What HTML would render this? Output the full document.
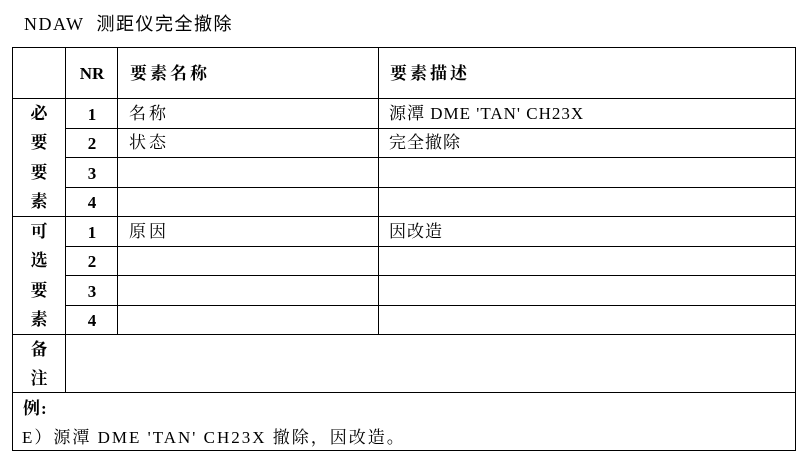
<!DOCTYPE html>
<html><head><meta charset="utf-8"><style>
body{margin:0;width:809px;height:473px;background:#fff;position:relative;overflow:hidden;font-family:"Liberation Serif","Noto Serif CJK SC",serif;color:#000}
.h{position:absolute;height:1.3px;background:#000}
.v{position:absolute;width:1.3px;background:#000}
.t{position:absolute;font-size:17px;line-height:20px;white-space:nowrap;letter-spacing:1px}
.b{font-weight:bold}
.c{width:26px;text-align:center;letter-spacing:0}
.n{width:52px;text-align:center;font-weight:bold;letter-spacing:0}
</style></head><body>
<div class="t" style="left:24px;top:14px;font-size:18px;letter-spacing:1.5px;font-family:'Liberation Serif','Noto Sans CJK SC',serif">NDAW&nbsp; 测距仪完全撤除</div>

<div class="h" style="left:12px;width:784px;top:47px"></div>
<div class="h" style="left:12px;width:784px;top:98px"></div>
<div class="h" style="left:65px;width:731px;top:128px"></div>
<div class="h" style="left:65px;width:731px;top:157px"></div>
<div class="h" style="left:65px;width:731px;top:187px"></div>
<div class="h" style="left:12px;width:784px;top:216px"></div>
<div class="h" style="left:65px;width:731px;top:246px"></div>
<div class="h" style="left:65px;width:731px;top:275px"></div>
<div class="h" style="left:65px;width:731px;top:305px"></div>
<div class="h" style="left:12px;width:784px;top:334px"></div>
<div class="h" style="left:12px;width:784px;top:392px"></div>
<div class="h" style="left:12px;width:784px;top:450px"></div>
<div class="v" style="left:12px;top:47px;height:404px"></div>
<div class="v" style="left:65px;top:47px;height:346px"></div>
<div class="v" style="left:117px;top:47px;height:288px"></div>
<div class="v" style="left:378px;top:47px;height:288px"></div>
<div class="v" style="left:795px;top:47px;height:404px"></div>

<div class="t n" style="left:66px;top:64px">NR</div>
<div class="t b" style="left:130px;top:64px;letter-spacing:3px">要素名称</div>
<div class="t b" style="left:390px;top:64px;letter-spacing:3px">要素描述</div>

<div class="t b c" style="left:26px;top:104px">必</div>
<div class="t b c" style="left:26px;top:133px">要</div>
<div class="t b c" style="left:26px;top:163px">要</div>
<div class="t b c" style="left:26px;top:192px">素</div>
<div class="t b c" style="left:26px;top:222px">可</div>
<div class="t b c" style="left:26px;top:251px">选</div>
<div class="t b c" style="left:26px;top:281px">要</div>
<div class="t b c" style="left:26px;top:310px">素</div>
<div class="t b c" style="left:26px;top:340px">备</div>
<div class="t b c" style="left:26px;top:369px">注</div>

<div class="t n" style="left:66px;top:105px">1</div>
<div class="t n" style="left:66px;top:134px">2</div>
<div class="t n" style="left:66px;top:164px">3</div>
<div class="t n" style="left:66px;top:193px">4</div>
<div class="t n" style="left:66px;top:223px">1</div>
<div class="t n" style="left:66px;top:252px">2</div>
<div class="t n" style="left:66px;top:282px">3</div>
<div class="t n" style="left:66px;top:311px">4</div>

<div class="t" style="left:129px;top:104px;letter-spacing:3px">名称</div>
<div class="t" style="left:129px;top:133px;letter-spacing:3px">状态</div>
<div class="t" style="left:129px;top:222px;letter-spacing:3px">原因</div>
<div class="t" style="left:389px;top:104px">源潭 DME 'TAN' CH23X</div>
<div class="t" style="left:389px;top:133px">完全撤除</div>
<div class="t" style="left:389px;top:222px">因改造</div>

<div class="t b" style="left:23px;top:399px">例:</div>
<div class="t" style="left:22px;top:428px;letter-spacing:2px">E）源潭 DME 'TAN' CH23X 撤除，因改造。</div>
</body></html>
